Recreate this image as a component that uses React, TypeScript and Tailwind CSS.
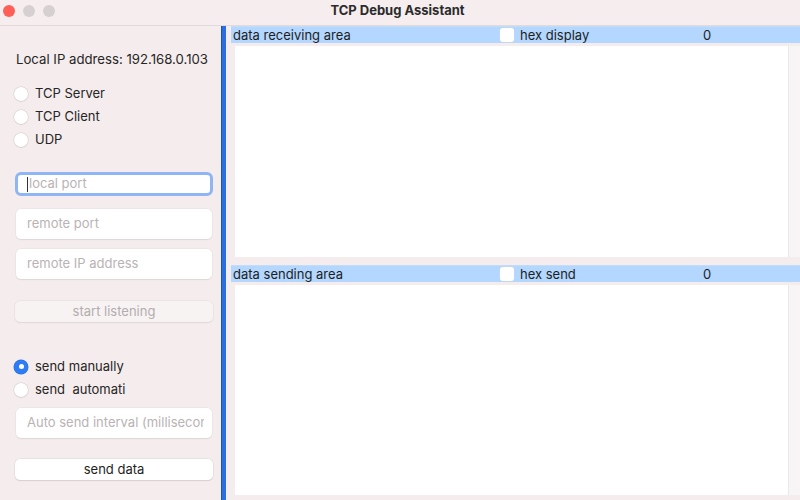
import React from "react";

function Radio({ checked, label }: { checked?: boolean; label: string }) {
  return (
    <div className="flex items-center h-[23px] pl-[14px]">
      {checked ? (
        <div className="w-[14px] h-[14px] rounded-full bg-[#2d7cf6] flex items-center justify-center shadow-[0_0_0_0.5px_#2a6fd8]">
          <div className="w-[5px] h-[5px] rounded-full bg-white" />
        </div>
      ) : (
        <div className="w-[14px] h-[14px] rounded-full bg-white shadow-[0_0_0_0.5px_#d2c9ca,0_0.5px_1px_#cfc6c7]" />
      )}
      <span className="ml-[7px] text-[13px] text-[#262626] leading-none whitespace-pre">{label}</span>
    </div>
  );
}

function Field({ text, mt }: { text: string; mt: string }) {
  return (
    <div
      className={`${mt} ml-[16px] w-[196px] h-[30px] bg-white rounded-[5px] shadow-[0_0_0_0.5px_#e6dfe0,0_1px_1px_#d8d0d1] flex items-center pl-[11px] text-[13px] text-[#b9b3b4]`}
    >
      <span className="w-[177px] overflow-hidden whitespace-nowrap">{text}</span>
    </div>
  );
}

function Header({ title, check, mt }: { title: string; check: string; mt?: string }) {
  return (
    <div className={`${mt ?? ""} h-[17px] bg-[#b3d7ff] border-t border-[#c3dcf8] flex items-center pt-[2px] pl-[2px] text-[13px] text-[#1e1e1e] whitespace-nowrap`}>
      <span className="w-[267px]">{title}</span>
      <div className="w-[14px] h-[14px] rounded-[3px] bg-white shadow-[0_0_0_0.5px_#c9d8ea] -mt-[2px]" />
      <span className="ml-[6px] w-[183px]">{check}</span>
      <span>0</span>
    </div>
  );
}

export default function App() {
  return (
    <div
      className="w-[800px] h-[500px] bg-[#f5eced] flex flex-col overflow-hidden"
      style={{ fontFamily: "Inter, 'Liberation Sans', sans-serif" }}
    >
      <div className="relative h-[26px] shrink-0 border-b border-[#e2d9da] bg-[#f6edee] flex items-center justify-center">
        <div className="absolute left-[3px] top-[5px] flex gap-[8px]">
          <div className="w-[12px] h-[12px] rounded-full bg-[#fe5f57]" />
          <div className="w-[12px] h-[12px] rounded-full bg-[#d7d0d1]" />
          <div className="w-[12px] h-[12px] rounded-full bg-[#d7d0d1]" />
        </div>
        <span className="text-[13px] font-bold text-[#2b2b2b] -mt-[3px] ml-[-5px]">TCP Debug Assistant</span>
      </div>
      <div className="flex flex-1 min-h-0">
        <div className="w-[221px] shrink-0 flex flex-col">
          <div className="mt-[25px] ml-[16px] text-[13.2px] leading-[16px] text-[#262626] whitespace-nowrap">
            Local IP address: 192.168.0.103
          </div>
          <div className="mt-[15px]">
            <Radio label="TCP Server" />
            <Radio label="TCP Client" />
            <Radio label="UDP" />
          </div>
          <div className="mt-[21px] ml-[15px] w-[198px] h-[24px] rounded-[6px] border-[3px] border-[#8fb6f2] bg-white flex items-center pl-[9px] text-[13px] text-[#b9b3b4]">
            <span className="w-[1px] h-[15px] bg-[#333] mr-[1px]" />
            <span>local port</span>
          </div>
          <Field text="remote port" mt="mt-[13px]" />
          <Field text="remote IP address" mt="mt-[10px]" />
          <div className="mt-[22px] ml-[15px] w-[198px] h-[21px] rounded-[5px] bg-[#f8f3f3] shadow-[0_0_0_0.5px_#e4dcdd,0_1px_1px_#ddd5d6] flex items-center justify-center text-[13px] text-[#b3adae]">
            start listening
          </div>
          <div className="mt-[33px]">
            <Radio checked label="send manually" />
            <Radio label="send  automati" />
          </div>
          <Field text="Auto send interval (millisecond)" mt="mt-[7px]" />
          <div className="mt-[21px] ml-[15px] w-[198px] h-[21px] rounded-[5px] bg-white shadow-[0_0_0_0.5px_#ddd5d6,0_1px_1px_#d3cbcc] flex items-center justify-center text-[13px] text-[#1e1e1e]">
            send data
          </div>
        </div>
        <div className="w-[5px] shrink-0 bg-[#2a6fdd] border-l border-[#1b55b8]" />
        <div className="flex-1 flex flex-col pl-[5px]">
          <Header title="data receiving area" check="hex display" />
          <div className="mt-[3px] h-[211px] flex">
            <div className="ml-[4px] flex-1 bg-white" />
            <div className="w-[12px] bg-[#f7f5f5] border-l border-[#ebe8e8]" />
          </div>
          <Header title="data sending area" check="hex send" mt="mt-[8px]" />
          <div className="mt-[3px] h-[210px] flex">
            <div className="ml-[4px] flex-1 bg-white" />
            <div className="w-[12px] bg-[#f7f5f5] border-l border-[#ebe8e8]" />
          </div>
        </div>
      </div>
    </div>
  );
}
